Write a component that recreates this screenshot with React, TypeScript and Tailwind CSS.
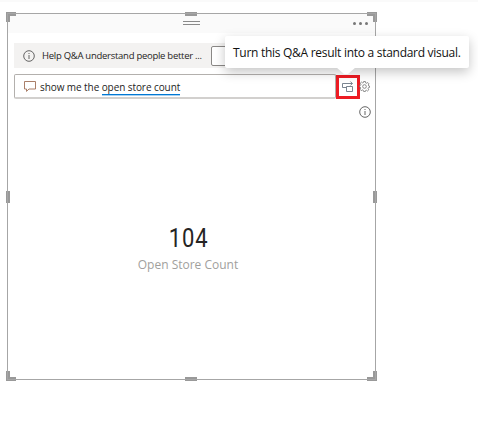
import React from "react";

const sans = "font-['Open_Sans','Noto_Sans',sans-serif]";

function InfoIcon({ className = "" }: { className?: string }) {
  return (
    <svg className={className} width="12" height="12" viewBox="0 0 12 12" fill="none" stroke="#555" strokeWidth="0.9">
      <circle cx="6" cy="6" r="5.3" />
      <path d="M6 5v4M6 3v1" />
    </svg>
  );
}

function ChatIcon() {
  return (
    <svg width="12" height="11" viewBox="0 0 12 11" fill="none" stroke="#a07058" strokeWidth="0.9">
      <path d="M.5.5h11v7.5H5L2.5 10.4V8h-2z" />
    </svg>
  );
}

function ConvertIcon() {
  return (
    <svg className="shrink-0" width="12" height="12" viewBox="0 0 12 12" fill="none" stroke="#6b7785" strokeWidth="0.9">
      <path d="M4.5 6.5h-4v-4h9.8M8.4.5l2 2-2 2M4.5 5.5h6v5h-6z" />
    </svg>
  );
}

function GearIcon() {
  return (
    <svg className="-ml-px" width="11" height="11" viewBox="0 0 12 12" fill="none" stroke="#777" strokeWidth="0.9">
      <path d="M5 .6h2l.3 1.5 1 .4 1.3-.8 1.3 1.4-.8 1.2.4 1 1 .2v1.5l-1.2.3-.4 1 .8 1.3-1.4 1.3-1.2-.8-1 .4L7 11.4H5l-.3-1.3-1-.4-1.3.8L1.1 9l.8-1.2-.4-1L.5 6.5V5l1.2-.3.4-1-.8-1.2 1.4-1.3 1.2.8 1-.4z" />
      <circle cx="6" cy="6" r="2" />
    </svg>
  );
}

function Handles() {
  return (
    <>
      <i className="absolute -left-px -top-px h-[10px] w-[10px] border-l-[4px] border-t-[4px] border-[#999]" />
      <i className="absolute -right-px -top-px h-[10px] w-[10px] border-r-[4px] border-t-[4px] border-[#999]" />
      <i className="absolute -bottom-px -left-px h-[10px] w-[10px] border-b-[4px] border-l-[4px] border-[#999]" />
      <i className="absolute -bottom-px -right-px h-[10px] w-[10px] border-b-[4px] border-r-[4px] border-[#999]" />
      <i className="absolute -top-px left-[178px] h-1 w-3 bg-[#999]" />
      <i className="absolute -bottom-px left-[178px] h-1 w-3 bg-[#999]" />
      <i className="absolute -left-px top-[178px] h-3 w-1 bg-[#999]" />
      <i className="absolute -right-px top-[178px] h-3 w-1 bg-[#999]" />
      <i className="absolute inset-0 border border-[#a6a6a6]" />
    </>
  );
}

export default function App() {
  return (
    <main className={`relative h-[426px] w-[478px] overflow-hidden bg-white pl-[7px] pt-[13px] text-[#252423] ${sans}`}>
      <div className="absolute inset-x-0 top-0 h-[2px] bg-[#fafafa]" />
      <section className="relative h-[367px] w-[369px] p-px">
        <header className="relative flex h-[19px] justify-center bg-[#fafafa] pt-[7px]">
          <div className="h-[4px] w-[17px] border-y border-[#8a8a8a]" />
          <div className="absolute right-[7px] top-2 flex gap-[3px]">
            <i className="h-[3px] w-[3px] rounded-full bg-[#777]" />
            <i className="h-[3px] w-[3px] rounded-full bg-[#777]" />
            <i className="h-[3px] w-[3px] rounded-full bg-[#777]" />
          </div>
        </header>
        <div className="ml-[6px] mt-[10px] flex h-[25px] w-[350px] items-center bg-[#f3f2f1] pl-[9px]">
          <InfoIcon />
          <span className="ml-[7px] mt-px w-[169px] whitespace-nowrap text-[9.5px] tracking-[-0.27px]">Help Q&amp;A understand people better ...</span>
          <button className="h-5 w-[90px] rounded-[2px] border border-[#8a8886] bg-white" aria-label="Action" />
        </div>
        <div className="ml-[6px] mt-[6px] flex h-[25px] items-center">
          <div className="flex h-[25px] w-[322px] items-center rounded-[2px] border border-b-2 border-[#b3b0ad] border-b-[#d2d0ce] pl-[9px]">
            <ChatIcon />
            <span className="ml-1 mt-[2px] whitespace-nowrap text-[10px] leading-[14px] tracking-[-0.08px]">show me the <span className="inline-block border-b-[1.5px] border-[#0078d4] shadow-[0_1px_0_rgba(0,120,212,0.35)]">open store count</span></span>
          </div>
          <button className="flex h-6 w-6 items-center justify-center border-[3px] border-[#ed1c24] bg-white" aria-label="Convert to visual"><ConvertIcon /></button>
          <GearIcon />
        </div>
        <div className="mr-[4px] mt-[6.5px] flex justify-end"><InfoIcon /></div>
        <div className="mt-[102.5px] flex flex-col items-center pr-[7px]">
          <strong className="scale-x-[0.88] pl-[1px] font-['Roboto',sans-serif] text-[25px] font-normal leading-[37px] tracking-[1.1px]">104</strong>
          <span className="text-[12px] leading-[16px] text-[#a19f9d]">Open Store Count</span>
        </div>
        <Handles />
      </section>
      <div className="absolute left-[225px] top-9 flex h-8 w-[244px] items-center rounded-[2px] bg-white pl-2 pt-px shadow-[0_4px_12px_rgba(0,0,0,0.23)]">
        <span className="whitespace-nowrap text-[12px] tracking-[-0.28px] text-[#111]">Turn this Q&amp;A result into a standard visual.</span>
        <svg className="absolute left-[110px] top-[31px]" width="22" height="8"><path d="M1 0h20l-8 7H9z" fill="white" /></svg>
      </div>
    </main>
  );
}
